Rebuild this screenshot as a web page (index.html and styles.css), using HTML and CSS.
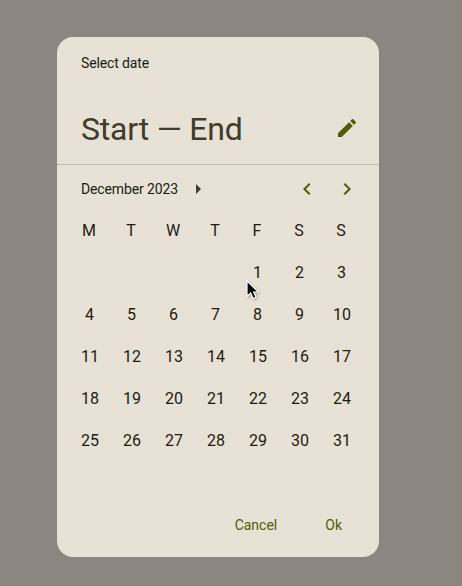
FILE: index.html
```html
<!DOCTYPE html>
<html lang="en">
<head>
<meta charset="utf-8">
<title>Select date</title>
<link rel="stylesheet" href="styles.css">
</head>
<body>
<main class="dialog">
  <header class="header">
    <div class="label">Select date</div>
    <div class="headline">
      <h1 class="range">Start — End</h1>
      <button class="icon-button" aria-label="Edit"><svg viewBox="0 0 24 24"><path d="M3 17.25V21h3.75L17.81 9.94l-3.75-3.75L3 17.25zM20.71 7.04a1 1 0 0 0 0-1.41l-2.34-2.34a1 1 0 0 0-1.41 0l-1.83 1.83 3.75 3.75 1.83-1.83z"/><path class="pencil-body" d="M4 18L14.5 7.5l2 2L6 20z"/></svg></button>
    </div>
  </header>
  <nav class="month-bar">
    <button class="month">December 2023 <svg class="caret" viewBox="0 0 5 10"><path d="M0 0l5 5-5 5z"/></svg></button>
    <div class="arrows">
      <button class="icon-button" aria-label="Previous month"><svg viewBox="0 0 24 24"><path d="M15.41 7.41L14 6l-6 6 6 6 1.41-1.41L10.83 12z"/></svg></button>
      <button class="icon-button" aria-label="Next month"><svg viewBox="0 0 24 24"><path d="M10 6L8.59 7.41 13.17 12l-4.58 4.59L10 18l6-6z"/></svg></button>
    </div>
  </nav>
  <div class="weekdays"><span>M</span><span>T</span><span>W</span><span>T</span><span>F</span><span>S</span><span>S</span></div>
  <div class="days">
    <span class="single first">1</span><span class="single">2</span><span class="single">3</span>
    <span class="single">4</span><span class="single">5</span><span class="single">6</span><span class="single">7</span><span class="single">8</span><span class="single">9</span><span>10</span>
    <span>11</span><span>12</span><span>13</span><span>14</span><span>15</span><span>16</span><span>17</span>
    <span>18</span><span>19</span><span>20</span><span>21</span><span>22</span><span>23</span><span>24</span>
    <span>25</span><span>26</span><span>27</span><span>28</span><span>29</span><span>30</span><span>31</span>
  </div>
  <footer class="actions"><button class="action">Cancel</button><button class="action">Ok</button></footer>
</main>
<svg class="cursor" viewBox="0 0 16 22"><path d="M2 2v15.5l3.6-3.4 2.5 5.4 3-1.3-2.4-5.2h4.8z"/></svg>
</body>
</html>
```

FILE: styles.css
```css
* { box-sizing: border-box; }

body {
  margin: 0;
  height: 586px;
  padding: 37px 0 0 57px;
  background: #8c8681;
  color: #1d1c13;
  font-family: Roboto, sans-serif;
  overflow: hidden;
}

button {
  display: flex;
  align-items: center;
  padding: 0;
  border: 0;
  background: none;
  color: inherit;
  font: inherit;
  letter-spacing: inherit;
}

.dialog {
  display: flex;
  flex-direction: column;
  width: 322px;
  height: 520px;
  border-radius: 16px;
  background: #e7e2d5;
}

.header {
  height: 128px;
  padding: 16px 20px 0 24px;
  border-bottom: 1px solid #bfbbaf;
}

.label {
  font-size: 14px;
  line-height: 20px;
  letter-spacing: -0.13px;
}

.headline {
  display: flex;
  align-items: center;
  justify-content: space-between;
  height: 40px;
  margin-top: 35px;
}

.range {
  margin: 0;
  padding-top: 2px;
  color: #403d2c;
  font-size: 32px;
  font-weight: 400;
  line-height: 40px;
  letter-spacing: -0.2px;
}

.icon-button {
  width: 24px;
  height: 24px;
  color: #555a05;
}

.icon-button svg {
  width: 24px;
  height: 24px;
  fill: currentColor;
}

.month-bar {
  display: flex;
  align-items: center;
  justify-content: space-between;
  height: 48px;
  padding: 0 20px 0 24px;
  font-size: 14px;
  letter-spacing: -0.13px;
}

.month { gap: 18px; }

.caret {
  width: 5px;
  height: 10px;
  fill: #403d2c;
}

.arrows {
  display: flex;
  gap: 16px;
}

.weekdays,
.days {
  display: grid;
  grid-template-columns: repeat(7, 42px);
  grid-auto-rows: 42px;
  align-items: center;
  text-align: center;
  font-size: 16px;
  line-height: 24px;
}

.weekdays {
  height: 39px;
  margin: -3px 0 0 11px;
}

.days {
  margin: 3px 0 0 12px;
}

.single { padding-right: 1px; }

.first { grid-column: 5; }

.actions {
  display: flex;
  justify-content: flex-end;
  gap: 48px;
  margin-top: auto;
  padding: 0 37px 22px 0;
  font-size: 14px;
  line-height: 20px;
  color: #555a05;
}

.cursor {
  position: absolute;
  left: 245px;
  top: 279px;
  width: 16px;
  height: 22px;
  fill: #080808;
  stroke: #fff;
  stroke-width: 1.2;
  filter: drop-shadow(1px 1px 1px rgba(0, 0, 0, .3));
}
```
